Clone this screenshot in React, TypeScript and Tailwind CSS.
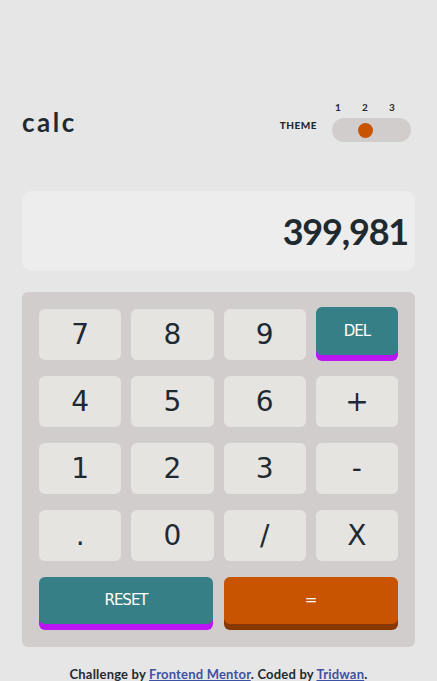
import React from "react";

const keys = ["7", "8", "9", "DEL", "4", "5", "6", "+", "1", "2", "3", "-", ".", "0", "/", "X"];

const heading = { fontFamily: "Lato, 'Noto Sans', sans-serif" };
const keyFont = { fontFamily: "'DejaVu Sans', Verdana, sans-serif" };

export default function App() {
  return (
    <div className="min-h-[681px] bg-[#e6e6e6] px-[22px] pt-[100px] text-[#1e2a30]" style={heading}>
      <header className="flex items-end justify-between pr-[4px]">
        <h1 className="mb-[7px] text-[26px] font-bold leading-none tracking-[2.5px]">calc</h1>
        <div className="flex items-end gap-[15px]">
          <span className="mb-[9px] text-[10px] font-black tracking-[0.5px]">THEME</span>
          <div className="flex flex-col">
            <div className="ml-[-1px] flex w-[68px] justify-between text-[10px] font-bold leading-[14px]">
              <span className="w-[14px] text-center">1</span>
              <span className="w-[14px] text-center">2</span>
              <span className="w-[14px] text-center">3</span>
            </div>
            <div className="mt-[4px] flex h-[24px] w-[79px] items-center rounded-full bg-[#d2cdcd] pl-[26px]">
              <span className="size-[15px] rounded-full bg-[#c85402]" />
            </div>
          </div>
        </div>
      </header>

      <div className="mt-[49px] flex h-[80px] items-center justify-end rounded-[10px] bg-[#ededed] pr-[7px]">
        <span className="text-[36px] font-bold tracking-[-1.2px]">399,981</span>
      </div>

      <div className="mt-[21px] rounded-[6px] bg-[#d2cdcd] px-[17px] py-[17px]" style={keyFont}>
        <div className="grid grid-cols-4 items-start gap-x-[10px] gap-y-[16px]">
          {keys.map((k) =>
            k === "DEL" ? (
              <button
                key={k}
                className="-mt-[2px] h-[48px] rounded-[6px] bg-[#377f86] text-[15px] tracking-[-1px] text-white shadow-[0_6px_0_#bc15f4]"
              >
                {k}
              </button>
            ) : (
              <button key={k} className="h-[51px] rounded-[6px] bg-[#e5e4e1] text-[28px] text-[#1e2a32]">
                {k}
              </button>
            )
          )}
        </div>
        <div className="mt-[16px] grid grid-cols-2 gap-x-[11px]">
          <button className="mb-[6px] h-[47px] rounded-[6px] bg-[#377f86] text-[15px] tracking-[-1px] text-white shadow-[0_6px_0_#bc15f4]">
            RESET
          </button>
          <button className="mb-[6px] h-[47px] rounded-[6px] bg-[#c85401] text-[15px] text-white shadow-[0_6px_0_#873901]">
            =
          </button>
        </div>
      </div>

      <p className="mt-[18px] pb-[4px] text-center text-[13px] font-bold tracking-[0.2px]">
        Challenge by{" "}
        <a href="#" className="text-[#3e52a3] underline">
          Frontend Mentor
        </a>
        . Coded by{" "}
        <a href="#" className="text-[#3e52a3] underline">
          Tridwan
        </a>
        .
      </p>
    </div>
  );
}
